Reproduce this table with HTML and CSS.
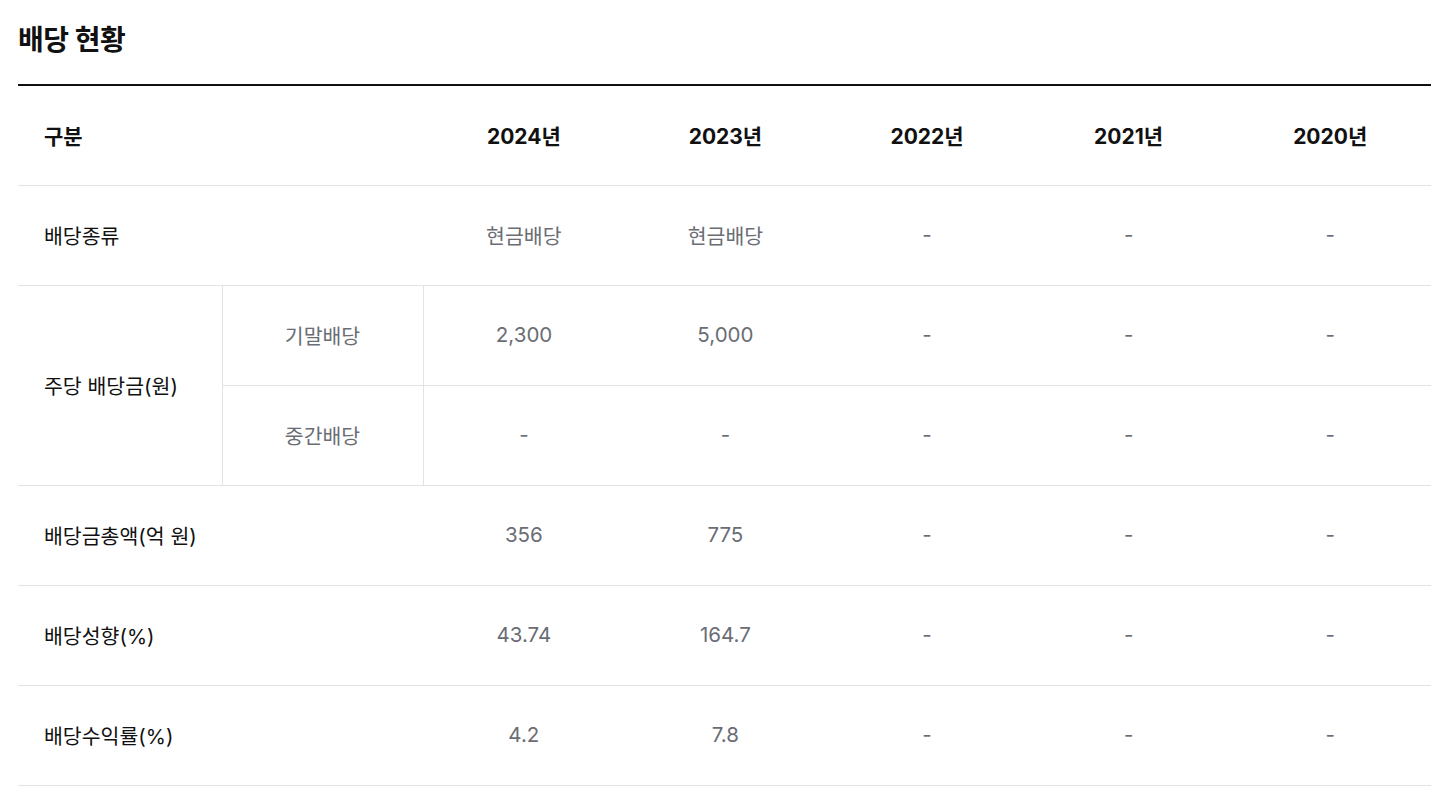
FILE: index.html
```html
<!DOCTYPE html>
<html lang="ko">
<head>
<meta charset="utf-8">
<link rel="stylesheet" href="styles.css">
</head>
<body>
<div class="wrap">
  <h2 class="title">배당 현황</h2>
  <table class="tbl">
    <colgroup>
      <col class="c1"><col class="c2"><col><col><col><col><col>
    </colgroup>
    <thead>
      <tr>
        <th class="lbl" colspan="2">구분</th>
        <th>2024년</th><th>2023년</th><th>2022년</th><th>2021년</th><th>2020년</th>
      </tr>
    </thead>
    <tbody>
      <tr>
        <td class="lbl" colspan="2">배당종류</td>
        <td>현금배당</td><td>현금배당</td><td>-</td><td>-</td><td>-</td>
      </tr>
      <tr>
        <td class="lbl vr" rowspan="2">주당 배당금(원)</td>
        <td class="sub vr">기말배당</td>
        <td>2,300</td><td>5,000</td><td>-</td><td>-</td><td>-</td>
      </tr>
      <tr>
        <td class="sub vr">중간배당</td>
        <td>-</td><td>-</td><td>-</td><td>-</td><td>-</td>
      </tr>
      <tr>
        <td class="lbl" colspan="2">배당금총액(억 원)</td>
        <td>356</td><td>775</td><td>-</td><td>-</td><td>-</td>
      </tr>
      <tr>
        <td class="lbl" colspan="2">배당성향(%)</td>
        <td>43.74</td><td>164.7</td><td>-</td><td>-</td><td>-</td>
      </tr>
      <tr>
        <td class="lbl" colspan="2">배당수익률(%)</td>
        <td>4.2</td><td>7.8</td><td>-</td><td>-</td><td>-</td>
      </tr>
    </tbody>
  </table>
</div>
</body>
</html>
```
FILE: styles.css
```css
html, body {
  margin: 0;
  padding: 0;
  background: #fff;
}
body {
  font-family: Inter, "Noto Sans CJK KR", sans-serif;
  color: #111;
}
.wrap {
  padding: 0 20px 0 18px;
}
.title {
  margin: 0;
  padding-top: 20px;
  height: 86px;
  box-sizing: border-box;
  font-size: 28px;
  line-height: 40px;
  font-weight: 700;
  letter-spacing: -0.5px;
  color: #111;
  border-bottom: 2px solid #111;
}
.tbl {
  width: 100%;
  border-collapse: collapse;
  table-layout: fixed;
}
.tbl .c1 {
  width: 204px;
}
.tbl .c2 {
  width: 201px;
}
.tbl th,
.tbl td {
  height: 97px;
  padding: 0 0 2px 0;
  text-align: center;
  vertical-align: middle;
  border-bottom: 1px solid #e3e3e6;
  font-size: 20.5px;
}
.tbl th {
  font-weight: 700;
  font-size: 21px;
  color: #111;
}
.tbl td {
  font-weight: 400;
  color: #6a6d74;
}
.tbl .lbl {
  text-align: left;
  padding-left: 26px;
  color: #111;
}
.tbl .sub {
  color: #6a6d74;
}
.tbl .vr {
  border-right: 1px solid #e3e3e6;
}
```
